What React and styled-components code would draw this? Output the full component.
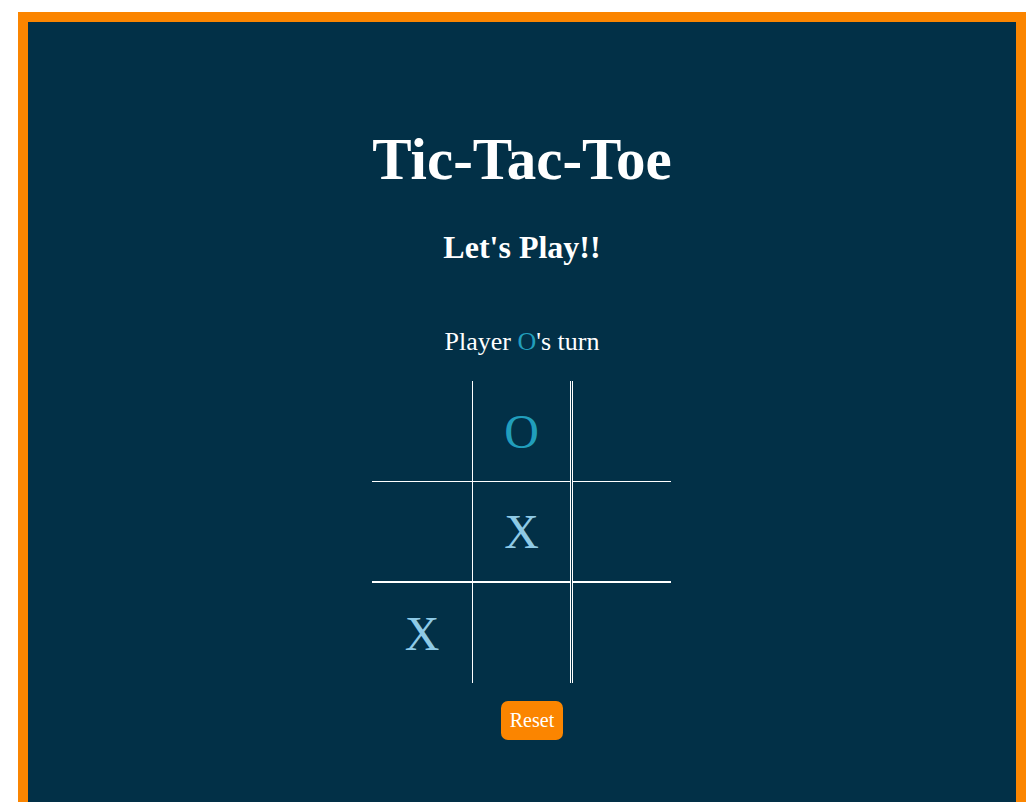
import React from 'react';
import styled, { createGlobalStyle } from 'styled-components';

const GlobalStyle = createGlobalStyle`
  body {
    margin: 0;
    background: #fff;
    font-family: 'Liberation Serif', 'Times New Roman', serif;
  }
`;

const Frame = styled.div`
  margin: 12px 9px 0 18px;
  min-height: 820px;
  border: 10px solid #fb8500;
  border-bottom: none;
  background-color: #023047;
  color: #fff;
  display: flex;
  flex-direction: column;
  align-items: center;
  padding-top: 103px;
`;

const Title = styled.h1`
  margin: 0;
  font-size: 59px;
  line-height: 68px;
  font-weight: 700;
`;

const SubTitle = styled.h2`
  margin: 34px 0 0;
  font-size: 32px;
  line-height: 40px;
  font-weight: 700;
`;

const Status = styled.p`
  margin: 59px 0 0;
  font-size: 26px;
  line-height: 32px;
`;

const Mark = styled.span`
  color: ${(p) => (p.$player === 'O' ? '#219ebc' : '#8ecae6')};
`;

const Board = styled.div`
  margin-top: 23px;
  width: 300px;
  display: flex;
  flex-direction: column;
`;

const Row = styled.div`
  display: flex;
  height: ${(p) => (p.$row === 1 ? 100 : 101)}px;
`;

const Cell = styled.div`
  box-sizing: border-box;
  display: flex;
  align-items: center;
  justify-content: center;
  width: ${(p) => [101, 98, 99][p.$col]}px;
  margin-left: ${(p) => (p.$col === 2 ? 1 : 0)}px;
  border-right: ${(p) => (p.$col < 2 ? '1px solid #fff' : 'none')};
  border-left: ${(p) => (p.$col === 2 ? '1px solid #fff' : 'none')};
  border-bottom: ${(p) => (p.$row < 2 ? '1px solid #fff' : 'none')};
  border-top: ${(p) => (p.$row === 2 ? '1px solid #fff' : 'none')};
  font-size: 48px;
  color: ${(p) => (p.$value === 'O' ? '#219ebc' : '#8ecae6')};
`;

const ResetButton = styled.button`
  margin: 18px 0 0 20px;
  width: 62px;
  height: 39px;
  padding: 0;
  border: none;
  border-radius: 7px;
  background-color: #fb8500;
  color: #fff;
  font-family: 'Liberation Serif', 'Times New Roman', serif;
  font-size: 20px;
  cursor: pointer;
`;

const board = [
  ['', 'O', ''],
  ['', 'X', ''],
  ['X', '', ''],
];

const App = () => {
  return (
    <>
      <GlobalStyle />
      <Frame>
        <Title>Tic-Tac-Toe</Title>
        <SubTitle>Let's Play!!</SubTitle>
        <Status>
          Player <Mark $player="O">O</Mark>'s turn
        </Status>
        <Board>
          {board.map((row, r) => (
            <Row key={r} $row={r}>
              {row.map((value, c) => (
                <Cell key={c} $row={r} $col={c} $value={value}>
                  {value}
                </Cell>
              ))}
            </Row>
          ))}
        </Board>
        <ResetButton>Reset</ResetButton>
      </Frame>
    </>
  );
};

export default App;
